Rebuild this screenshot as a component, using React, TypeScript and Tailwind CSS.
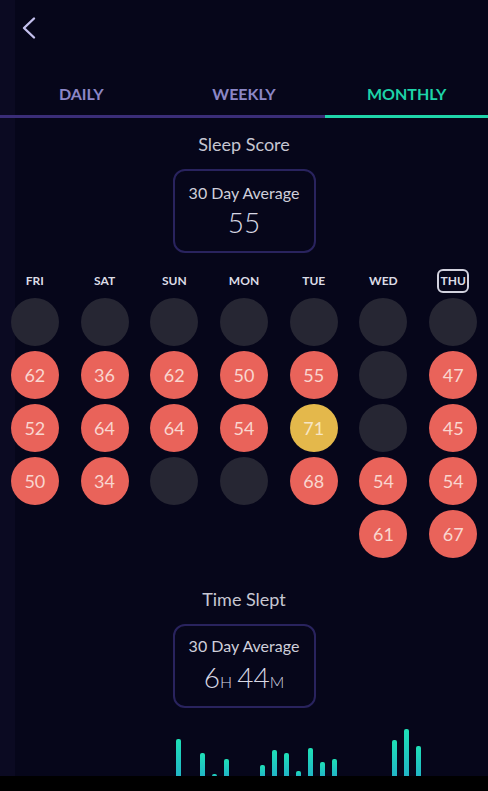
import type { ReactNode } from "react";

type Cell = number | "empty" | null;
type Tone = "red" | "yellow";

const days = ["FRI", "SAT", "SUN", "MON", "TUE", "WED", "THU"];

const scoreRows: Cell[][] = [
  ["empty", "empty", "empty", "empty", "empty", "empty", "empty"],
  [62, 36, 62, 50, 55, "empty", 47],
  [52, 64, 64, 54, 71, "empty", 45],
  [50, 34, "empty", "empty", 68, 54, 54],
  [null, null, null, null, null, 61, 67],
];

// height in px per day slot, 0 = no data
const sleepBars = [
  0, 0, 0, 0, 0, 0, 0, 0, 0, 37, 0, 23, 2, 17, 0, 0, 11, 26, 23, 5, 28, 14, 17, 0, 0, 0, 0, 36, 47, 30,
];

function scoreTone(value: number): Tone {
  return value >= 70 ? "yellow" : "red";
}

function ScoreDot({ cell }: { cell: Cell }) {
  if (cell === null) return <div className="h-12 w-12" />;
  if (cell === "empty") return <div className="h-12 w-12 rounded-full bg-[#262633]" />;
  const tone = scoreTone(cell);
  return (
    <div
      className={
        "flex h-12 w-12 items-center justify-center rounded-full text-[18px] leading-none " +
        (tone === "yellow" ? "bg-[#e4b84b] text-[#f7e6c4]" : "bg-[#e9635a] text-[#f9d6cf]")
      }
    >
      {cell}
    </div>
  );
}

function AverageCard({ children, className }: { children: ReactNode; className: string }) {
  return (
    <div
      className={
        "mx-auto flex h-[84px] w-[143px] flex-col items-center rounded-[12px] border-2 border-[#29235e] " +
        className
      }
    >
      <p className="text-[16px] leading-5 text-[#cfcfdb]">30 Day Average</p>
      {children}
    </div>
  );
}

export default function App() {
  return (
    <div className="flex h-[791px] flex-col overflow-hidden bg-[linear-gradient(to_right,#0b0a22_15px,#06061a_15px)] font-['Lato','Noto_Sans',sans-serif]">
      <div className="h-[56px] pl-[21px] pt-[16px]">
        <svg width="16" height="24" viewBox="0 0 16 24" fill="none">
          <path
            d="M13 2.5 L3 12 L13 21.5"
            stroke="#c4c0ee"
            strokeWidth="2.4"
            strokeLinecap="round"
            strokeLinejoin="round"
          />
        </svg>
      </div>

      <div className="grid grid-cols-3">
        {["DAILY", "WEEKLY", "MONTHLY"].map((tab) => {
          const active = tab === "MONTHLY";
          return (
            <div
              key={tab}
              className={
                "border-b-[3px] pb-[11px] pt-[28px] text-center text-[16px] font-bold leading-5 " +
                (active ? "border-[#1fd4aa] text-[#1dd3a8]" : "border-[#3a2d78] text-[#8b86c6]")
              }
            >
              {tab}
            </div>
          );
        })}
      </div>

      <h2 className="mt-[14px] text-center text-[18px] leading-6 text-[#c6c6d2]">Sleep Score</h2>
      <AverageCard className="mt-[13px] h-[83px] pt-[12px]">
        <p className="mt-[3px] text-[28px] font-light leading-8 text-[#d8d8e4]">55</p>
      </AverageCard>

      <div className="mt-[16px] grid grid-cols-7">
        {days.map((day) => (
          <div key={day} className="flex h-6 items-center justify-center">
            <span
              className={
                "text-[12px] font-bold leading-none text-[#dcdce6] " +
                (day === "THU"
                  ? "flex h-6 w-8 items-center justify-center rounded-[6px] border-2 border-[#d2d2de]"
                  : "")
              }
            >
              {day}
            </span>
          </div>
        ))}
      </div>

      <div className="mt-[5px] flex flex-col gap-[5px]">
        {scoreRows.map((row, r) => (
          <div key={r} className="grid grid-cols-7">
            {row.map((cell, c) => (
              <div key={c} className="flex justify-center">
                <ScoreDot cell={cell} />
              </div>
            ))}
          </div>
        ))}
      </div>

      <h2 className="mt-[29px] text-center text-[18px] leading-6 text-[#c6c6d2]">Time Slept</h2>
      <AverageCard className="mt-[13px] pt-[10px]">
        <p className="mt-[5px] flex items-baseline font-light leading-8 text-[#d8d8e4]">
          <span className="text-[28px]">6</span>
          <span className="mr-[5px] text-[16px]">H</span>
          <span className="text-[28px]">44</span>
          <span className="text-[16px]">M</span>
        </p>
      </AverageCard>

      <div className="flex flex-1 items-end pl-[64px]">
        {sleepBars.map((h, i) => (
          <div key={i} className="flex w-[12px] justify-center">
            {h > 0 ? (
              <div
                className="w-[5px] rounded-t-[2px] bg-gradient-to-b from-[#1fe0b6] to-[#22b6c6]"
                style={{ height: h }}
              />
            ) : null}
          </div>
        ))}
      </div>
      <div className="h-[15px] bg-black" />
    </div>
  );
}
